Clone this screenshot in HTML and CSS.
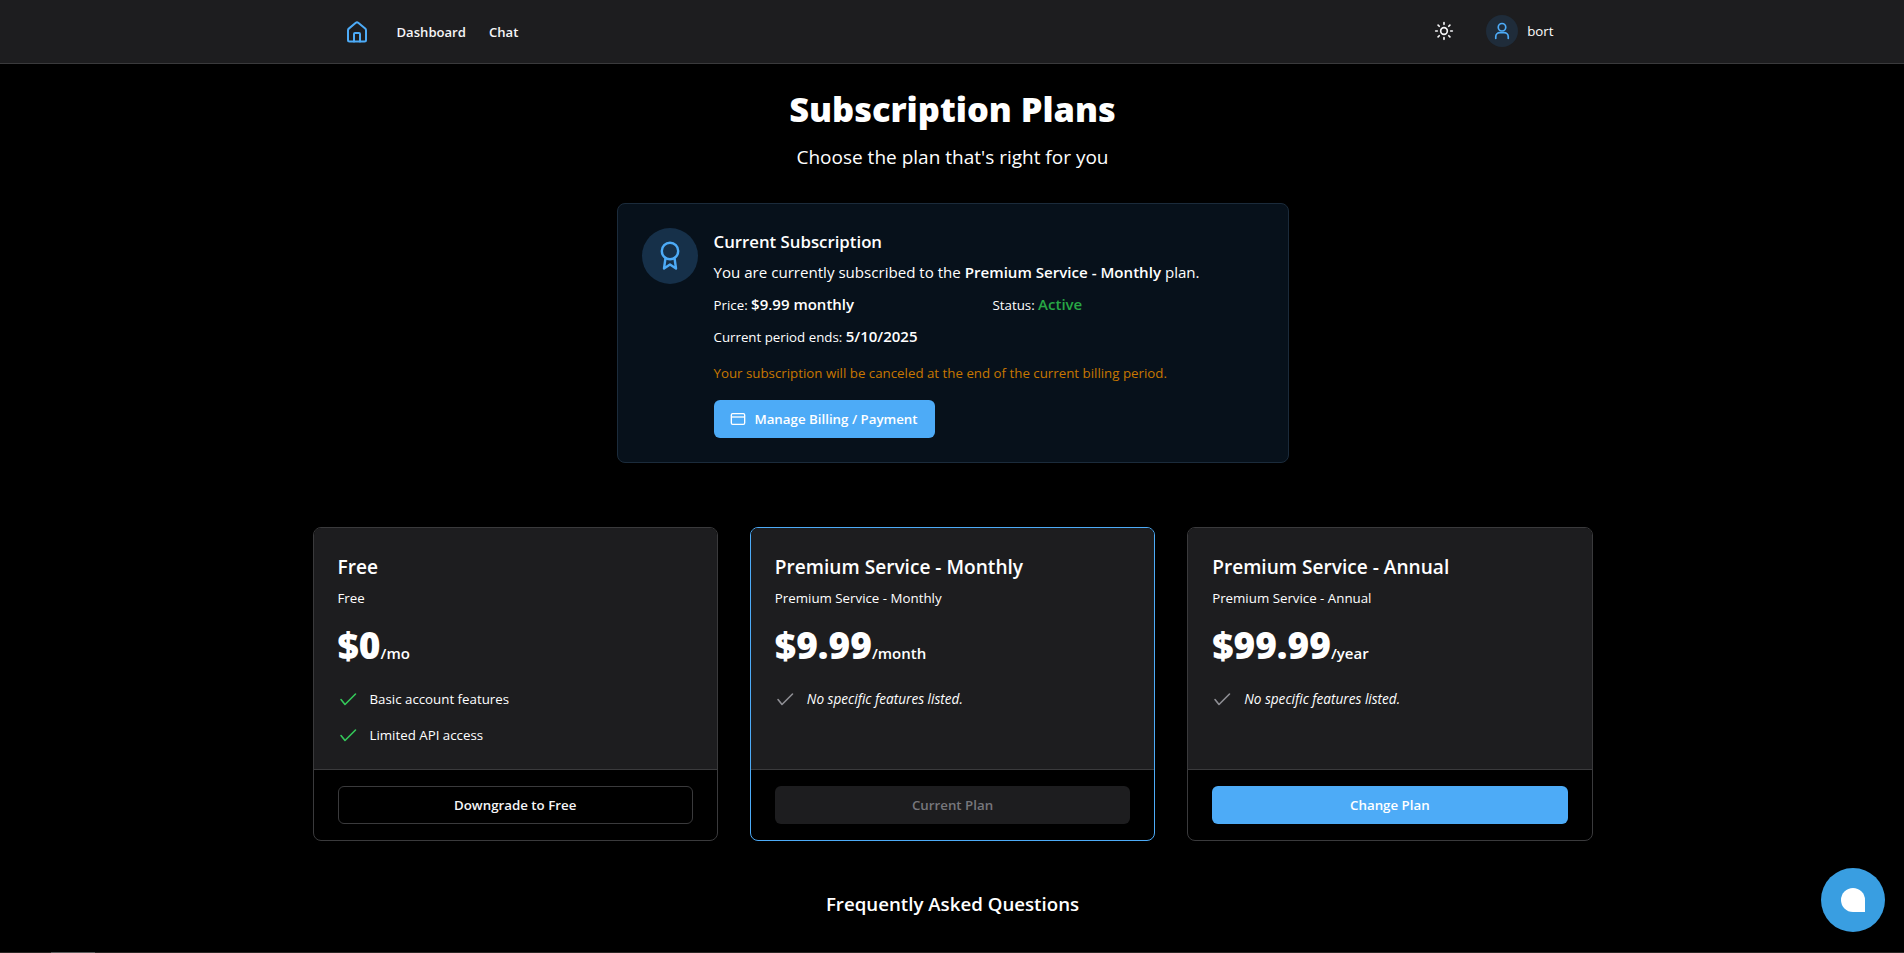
FILE: index.html
```html
<!DOCTYPE html>
<html lang="en">
<head>
  <meta charset="UTF-8" />
  <meta name="viewport" content="width=device-width, initial-scale=1.0">
  <title>Subscription Plans</title>
  <link rel="stylesheet" href="styles.css">
</head>
<body>
  <header class="topbar">
    <nav class="topbar-inner">
      <div class="nav-left">
        <a href="#" class="home-link" aria-label="Home">
          <svg width="24" height="24" viewBox="0 0 24 24" fill="none" stroke="currentColor" stroke-width="2" stroke-linecap="round" stroke-linejoin="round"><path d="M3 10.200c0-.6.300-1.200.800-1.600l7-5.800a2 2 0 0 1 2.400 0l7 5.800c.5.400.800 1 .800 1.600V20a1.500 1.500 0 0 1-1.500 1.500h-15A1.500 1.500 0 0 1 3 20z"/><path d="M9 21.500V14a1 1 0 0 1 1-1h4a1 1 0 0 1 1 1v7.500"/></svg>
        </a>
        <a href="#" class="nav-link">Dashboard</a>
        <a href="#" class="nav-link">Chat</a>
      </div>
      <div class="nav-right">
        <button class="theme-btn" aria-label="Toggle theme">
          <svg width="20" height="20" viewBox="0 0 24 24" fill="none" stroke="currentColor" stroke-width="2" stroke-linecap="round"><circle cx="12" cy="12" r="4"/><path d="M12 2v2M12 20v2M2 12h2M20 12h2M4.900 4.900l1.400 1.400M17.700 17.700l1.400 1.400M4.900 19.100l1.400-1.400M17.700 6.300l1.400-1.400"/></svg>
        </button>
        <div class="user">
          <span class="avatar">
            <svg width="20" height="20" viewBox="0 0 24 24" fill="none" stroke="currentColor" stroke-width="2" stroke-linecap="round"><circle cx="12" cy="7.500" r="4.500"/><path d="M4.500 21v-2a5 5 0 0 1 5-5h5a5 5 0 0 1 5 5v2"/></svg>
          </span>
          <span class="username">bort</span>
        </div>
      </div>
    </nav>
  </header>

  <main class="page">
    <h1 class="page-title">Subscription Plans</h1>
    <p class="page-sub">Choose the plan that's right for you</p>

    <section class="current">
      <div class="current-icon">
        <svg width="28" height="34" viewBox="0 0 28 34" fill="none" stroke="currentColor" stroke-width="2.400" stroke-linecap="round" stroke-linejoin="round"><circle cx="14" cy="12" r="8.200"/><path d="M9.500 19 8 29.500l6-4 6 4L18.500 19"/></svg>
      </div>
      <div class="current-body">
        <h2 class="current-title">Current Subscription</h2>
        <p class="current-text">You are currently subscribed to the <strong>Premium Service - Monthly</strong> plan.</p>
        <div class="current-meta">
          <span class="meta-item">Price: <strong>$9.99 monthly</strong></span>
          <span class="meta-item">Status: <strong class="active">Active</strong></span>
          <span class="meta-item meta-wide">Current period ends: <strong>5/10/2025</strong></span>
        </div>
        <p class="cancel-note">Your subscription will be canceled at the end of the current billing period.</p>
        <button class="btn btn-blue btn-billing">
          <svg width="16" height="16" viewBox="0 0 24 24" fill="none" stroke="currentColor" stroke-width="2" stroke-linejoin="round"><rect x="2" y="4" width="20" height="16" rx="2"/><path d="M2 9h20"/></svg>
          Manage Billing / Payment
        </button>
      </div>
    </section>

    <section class="plans">
      <article class="plan">
        <div class="plan-body">
          <h3 class="plan-name">Free</h3>
          <p class="plan-desc">Free</p>
          <p class="plan-price"><span class="amount">$0</span><span class="per">/mo</span></p>
          <ul class="features">
            <li><svg class="check check-green" viewBox="0 0 20 20"><path d="M3 10.500l4 5L17.500 5"/></svg>Basic account features</li>
            <li><svg class="check check-green" viewBox="0 0 20 20"><path d="M3 10.500l4 5L17.500 5"/></svg>Limited API access</li>
          </ul>
        </div>
        <div class="plan-foot">
          <button class="btn btn-outline">Downgrade to Free</button>
        </div>
      </article>

      <article class="plan plan-current">
        <div class="plan-body">
          <h3 class="plan-name">Premium Service - Monthly</h3>
          <p class="plan-desc">Premium Service - Monthly</p>
          <p class="plan-price"><span class="amount">$9.99</span><span class="per">/month</span></p>
          <ul class="features">
            <li class="none"><svg class="check" viewBox="0 0 20 20"><path d="M3 10.500l4 5L17.500 5"/></svg>No specific features listed.</li>
          </ul>
        </div>
        <div class="plan-foot">
          <button class="btn btn-disabled" disabled>Current Plan</button>
        </div>
      </article>

      <article class="plan">
        <div class="plan-body">
          <h3 class="plan-name">Premium Service - Annual</h3>
          <p class="plan-desc">Premium Service - Annual</p>
          <p class="plan-price"><span class="amount">$99.99</span><span class="per">/year</span></p>
          <ul class="features">
            <li class="none"><svg class="check" viewBox="0 0 20 20"><path d="M3 10.500l4 5L17.500 5"/></svg>No specific features listed.</li>
          </ul>
        </div>
        <div class="plan-foot">
          <button class="btn btn-blue">Change Plan</button>
        </div>
      </article>
    </section>

    <h2 class="faq-title">Frequently Asked Questions</h2>
  </main>

  <button class="chat-fab" aria-label="Open chat"><span class="chat-bubble"></span></button>

  <div class="bottom-strip"><span class="bottom-thumb"></span></div>
</body>
</html>
```

FILE: styles.css
```css
* {
  box-sizing: border-box;
}

html, body {
  height: 100%;
}

body {
  margin: 0;
  background: #000;
  color: #fff;
  font-family: 'Open Sans', 'Noto Sans', sans-serif;
  font-size: 14px;
  overflow: hidden;
}

h1, h2, h3, p, ul {
  margin: 0;
  padding: 0;
}

.topbar {
  height: 64px;
  padding-left: 1px;
  background: #1d1d1f;
  border-bottom: 1px solid #3a3a3c;
}

.topbar-inner {
  width: 1280px;
  height: 62px;
  margin: 0 auto;
  padding: 0 39px 0 32px;
  display: flex;
  justify-content: space-between;
  align-items: center;
}

.nav-left, .nav-right, .user {
  display: flex;
  align-items: center;
}

.nav-left {
  margin-top: 1px;
}

.home-link {
  display: flex;
  color: #4dabf7;
  margin-right: 28px;
}

.nav-link {
  color: #f5f5f7;
  font-size: 13.100px;
  font-weight: 600;
  text-decoration: none;
  margin-right: 23px;
}

.theme-btn {
  display: flex;
  padding: 0;
  background: none;
  border: 0;
  color: #f5f5f7;
  margin-right: 32px;
}

.avatar {
  width: 32px;
  height: 32px;
  border-radius: 50%;
  background: #1f2c3a;
  color: #4dabf7;
  display: flex;
  align-items: center;
  justify-content: center;
  margin-right: 9px;
}

.username {
  font-size: 13.300px;
}

.page {
  padding-left: 1px;
  display: flex;
  flex-direction: column;
  align-items: center;
}

.page-title {
  font-size: 34.400px;
  line-height: 40px;
  font-weight: 800;
  margin-top: 25px;
}

.page-sub {
  font-size: 19px;
  line-height: 28px;
  margin-top: 14px;
}

.current {
  width: 672px;
  height: 260px;
  margin-top: 32px;
  padding: 24px;
  display: flex;
  gap: 16px;
  background: #07111b;
  border: 1px solid #1b2b3b;
  border-radius: 8px;
}

.current-icon {
  width: 56px;
  height: 56px;
  flex: none;
  border-radius: 50%;
  background: #163049;
  color: #4dabf7;
  display: flex;
  align-items: center;
  justify-content: center;
}

.current-title {
  font-size: 16.800px;
  line-height: 28px;
  font-weight: 600;
}

.current-text {
  font-size: 15.100px;
  line-height: 24px;
  margin-top: 4px;
}

.current-text strong {
  font-weight: 600;
}

.current-meta {
  display: grid;
  grid-template-columns: 279px 1fr;
  row-gap: 7px;
  margin-top: 8px;
  font-size: 13.300px;
  line-height: 24px;
}

.meta-item strong {
  font-size: 15px;
  font-weight: 600;
}

.meta-wide {
  grid-column: 1 / 3;
}

.active {
  color: #28a745;
}

.cancel-note {
  color: #c77700;
  font-size: 13.300px;
  line-height: 20px;
  margin-top: 14px;
}

.btn {
  height: 38px;
  border-radius: 6px;
  font-family: inherit;
  font-size: 13.300px;
  font-weight: 600;
  cursor: pointer;
  display: flex;
  align-items: center;
  justify-content: center;
  width: 100%;
}

.btn-blue {
  background: #4dabf7;
  border: 0;
  color: #fff;
}

.btn-outline {
  background: #000;
  border: 1px solid #3a3a3c;
  color: #f5f5f7;
}

.btn-disabled {
  background: #1d1d1f;
  border: 0;
  color: #77777c;
}

.btn-billing {
  width: 221px;
  margin-top: 17px;
  gap: 8px;
}

.plans {
  width: 1280px;
  margin-top: 64px;
  display: grid;
  grid-template-columns: repeat(3, 1fr);
  gap: 32px;
}

.plan {
  height: 314px;
  display: flex;
  flex-direction: column;
  background: #000;
  border: 1px solid #3a3a3c;
  border-radius: 8px;
  overflow: hidden;
}

.plan-current {
  border-color: #4dabf7;
}

.plan-body {
  height: 242px;
  padding: 25px 24px 0;
  background: #1d1d1f;
  border-bottom: 1px solid #3a3a3c;
}

.plan-name {
  font-size: 19.100px;
  line-height: 28px;
  font-weight: 600;
}

.plan-desc {
  font-size: 13.300px;
  line-height: 20px;
  margin-top: 7px;
}

.plan-price {
  display: flex;
  align-items: baseline;
  margin-top: 13px;
  line-height: 48px;
}

.amount {
  font-size: 37px;
  font-weight: 800;
}

.per {
  font-size: 15px;
  font-weight: 600;
}

.features {
  list-style: none;
  margin-top: 12px;
}

.features li {
  display: flex;
  align-items: center;
  font-size: 13.300px;
  line-height: 20px;
  margin-bottom: 16px;
}

.features .none {
  font-size: 13.600px;
  font-style: italic;
}

.check {
  width: 20px;
  height: 20px;
  flex: none;
  margin-right: 12px;
  fill: none;
  stroke: #8e8e93;
  stroke-width: 1.600;
  stroke-linecap: round;
  stroke-linejoin: round;
}

.check-green {
  stroke: #34c759;
}

.plan-foot {
  padding: 16px 24px;
}

.faq-title {
  font-size: 18.700px;
  line-height: 28px;
  font-weight: 600;
  margin-top: 49px;
}

.chat-fab {
  position: fixed;
  right: 19px;
  bottom: 21px;
  width: 64px;
  height: 64px;
  padding: 0;
  border: 0;
  border-radius: 50%;
  background: #399ee1;
  display: flex;
  align-items: center;
  justify-content: center;
}

.chat-bubble {
  width: 24px;
  height: 24px;
  background: #fff;
  border-radius: 50% 50% 0 50%;
}

/* 1px sliver of the page below the fold */
.bottom-strip {
  position: fixed;
  left: 0;
  right: 0;
  bottom: 0;
  height: 1px;
  background: #2a2624;
}

.bottom-thumb {
  display: block;
  width: 44px;
  height: 1px;
  margin-left: 51px;
  background: #5a5a5a;
}
```
